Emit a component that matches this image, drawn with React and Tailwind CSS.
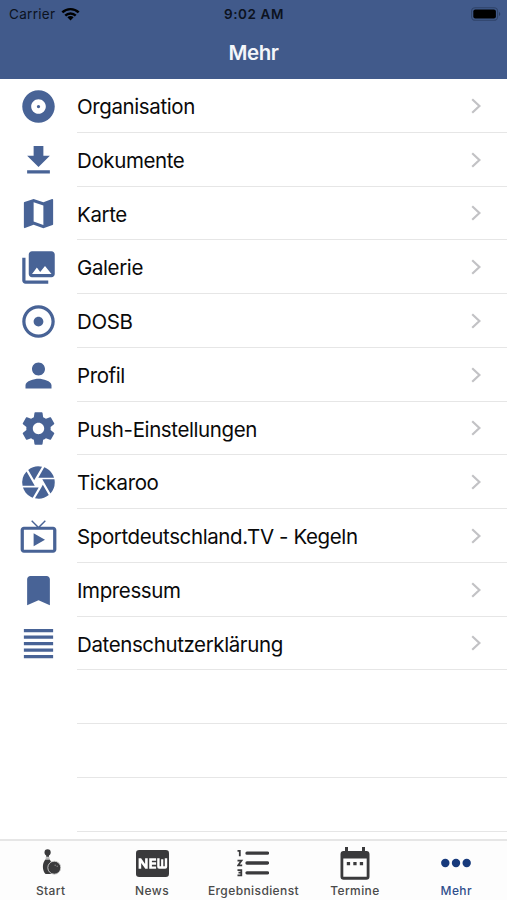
import {
  MdAdjust,
  MdAlbum,
  MdBookmark,
  MdCamera,
  MdFormatAlignJustify,
  MdMap,
  MdPerson,
} from 'react-icons/md';

const Icon = ({ children }) => (
  <svg viewBox="0 0 24 24" className="size-[39px]" fill="currentColor">
    {children}
  </svg>
);

const DownloadIcon = () => (
  <Icon>
    <path d="M19 9h-4V3H9v6H5l7 7 7-7zM5 18v2h14v-2H5z" />
  </Icon>
);

const GalleryIcon = () => (
  <Icon>
    <path d="M22 16V4c0-1.1-.9-2-2-2H8c-1.1 0-2 .9-2 2v12c0 1.1.9 2 2 2h12c1.1 0 2-.9 2-2zm-11-4l2.03 2.71L16 11l4 5H8l3-4zM2 6v14c0 1.1.9 2 2 2h14v-2H4V6H2z" />
  </Icon>
);

const SettingsIcon = () => (
  <Icon>
    <path d="M19.43 12.98c.04-.32.07-.64.07-.98s-.03-.66-.07-.98l2.11-1.65c.19-.15.24-.42.12-.64l-2-3.46c-.12-.22-.39-.3-.61-.22l-2.49 1c-.52-.4-1.08-.73-1.69-.98l-.38-2.65C14.46 2.18 14.25 2 14 2h-4c-.25 0-.46.18-.49.42l-.38 2.65c-.61.25-1.17.59-1.69.98l-2.49-1c-.23-.09-.49 0-.61.22l-2 3.46c-.13.22-.07.49.12.64l2.11 1.65c-.04.32-.07.65-.07.98s.03.66.07.98l-2.11 1.65c-.19.15-.24.42-.12.64l2 3.46c.12.22.39.3.61.22l2.49-1c.52.4 1.08.73 1.69.98l.38 2.65c.03.24.24.42.49.42h4c.25 0 .46-.18.49-.42l.38-2.65c.61-.25 1.17-.59 1.69-.98l2.49 1c.23.09.49 0 .61-.22l2-3.46c.12-.22.07-.49-.12-.64l-2.11-1.65zM12 15.5c-1.93 0-3.5-1.57-3.5-3.5s1.57-3.5 3.5-3.5 3.5 1.57 3.5 3.5-1.57 3.5-3.5 3.5z" />
  </Icon>
);

const TvIcon = () => (
  <Icon>
    <path d="M21 6h-7.9l3.4-3.4-.6-.6L12 5.9 8.100 2l-.6.6L10.900 6H3c-1.1 0-2 .89-2 2v12c0 1.1.9 2 2 2h18c1.1 0 2-.9 2-2V8c0-1.11-.9-2-2-2zm0 14.200H3V7.800h18v12.400zM9 10v8l7-4z" />
  </Icon>
);

const BowlingIcon = () => (
  <svg viewBox="0 0 20 28" className="h-[28px] w-[20px]" fill="#3a3a3c">
    <circle cx="6.600" cy="3.400" r="3.100" />
    <path d="M5.200 5.500h2.800v2.300H5.200z" />
    <path d="M4.700 8.500h3.800v1.100H4.700z" fill="#8a8a8a" />
    <path d="M4.400 10.400h4.400C10.600 13 11 16 11 19v6H4.600C1.200 21.500 .8 14.500 4.400 10.400z" />
    <circle cx="13.300" cy="18.700" r="6.500" stroke="#d0d0d0" strokeWidth="0.900" />
    <circle cx="14.200" cy="16.200" r="0.700" fill="#8a8a8a" />
    <circle cx="16.200" cy="17.300" r="0.700" fill="#8a8a8a" />
  </svg>
);

const NewIcon = () => (
  <svg viewBox="0 0 33 27" className="h-[27px] w-[33px]" fill="none">
    <rect width="33" height="27" rx="3.200" fill="#3a3a3c" />
    <path fill="#fff" d="M2.600 8.200h2.500l4 5.700V8.200h2.600v10.600H9.300l-4.100-5.700v5.700H2.600z" />
    <path fill="#fff" d="M13.200 8.200h6.900v2.500h-4.200v1.600h4.200v2.500h-4.200v1.600h4.200v2.400h-6.900z" />
    <path fill="#fff" d="M21.200 8.200h2.400v8h1.500v-7h2.200v7h1.500v-8h2.400v8.600q0 2-2 2h-6q-2 0-2-2z" />
  </svg>
);

const NumberedListIcon = () => (
  <svg viewBox="0 0 32 28" className="h-[28px] w-[32px]" fill="none" stroke="#3a3a3c">
    <path strokeWidth="3.300" strokeLinecap="round" d="M10 4.200h20.500M10 14h20.500M10 23.800h20.500" />
    <g strokeWidth="1.800">
      <path d="M.5 1.900h2.300V7.200" />
      <path d="M.5 11.600h4L1.200 16.300h4" />
      <path d="M.5 21.100h3.800v5.200H.5M1.500 23.700h2.800" />
    </g>
  </svg>
);

const CalendarIcon = () => (
  <svg viewBox="0 0 30 33" className="h-[33px] w-[30px]" fill="#3a3a3c">
    <path d="M5 0h3v4h14V0h3v4h1.500A3.200 3.200 0 0 1 29.500 7v22.500a3.200 3.200 0 0 1-3.200 3.200H3.700A3.200 3.200 0 0 1 .5 29.500V7A3.200 3.200 0 0 1 3.500 4H5zM3.300 11.500V29.800h23.400V11.500z" />
    <path d="M6.800 15h3.300v3.300H6.800zM13.300 15h3.300v3.300h-3.300zM19.800 15h3.300v3.300h-3.300z" />
  </svg>
);

const DotsIcon = () => (
  <svg viewBox="0 0 30 10" className="h-[10px] w-[30px]" fill="#173a7c">
    <circle cx="4.300" cy="5" r="4.200" />
    <circle cx="15" cy="5" r="4.200" />
    <circle cx="25.700" cy="5" r="4.200" />
  </svg>
);

const menuItems = [
  { label: 'Organisation', icon: MdAlbum },
  { label: 'Dokumente', icon: DownloadIcon },
  { label: 'Karte', icon: MdMap },
  { label: 'Galerie', icon: GalleryIcon },
  { label: 'DOSB', icon: MdAdjust },
  { label: 'Profil', icon: MdPerson },
  { label: 'Push-Einstellungen', icon: SettingsIcon },
  { label: 'Tickaroo', icon: MdCamera },
  { label: 'Sportdeutschland.TV - Kegeln', icon: TvIcon },
  { label: 'Impressum', icon: MdBookmark },
  { label: 'Datenschutzerklärung', icon: MdFormatAlignJustify },
];

const tabs = [
  { label: 'Start', icon: BowlingIcon },
  { label: 'News', icon: NewIcon },
  { label: 'Ergebnisdienst', icon: NumberedListIcon },
  { label: 'Termine', icon: CalendarIcon },
  { label: 'Mehr', icon: DotsIcon, active: true },
];

const StatusBar = () => (
  <div className="grid h-[28px] grid-cols-3 items-center pl-[9px] pr-[6px] text-[13.5px] leading-none text-[#0c1220]">
    <div className="flex items-center gap-[6px]">
      <span className="pt-px tracking-[0.3px]">Carrier</span>
      <svg viewBox="0 0 20 14" className="h-[14px] w-[19px]" fill="none" stroke="#000">
        <path strokeWidth="2.600" d="M1.400 5.400a12.200 12.200 0 0 1 17.200 0M4.500 8.700a7.800 7.800 0 0 1 11 0" />
        <path fill="#000" stroke="none" d="M10 13.800 6.700 10.500a4.700 4.700 0 0 1 6.600 0z" />
      </svg>
    </div>
    <span className="pr-[2px] pt-px text-center font-semibold tracking-[0.6px]">9:02 AM</span>
    <div className="flex justify-end pb-px">
      <svg viewBox="0 0 30 14" className="h-[14px] w-[30px]">
        <rect x="0.600" y="0.700" width="26" height="12.600" rx="3.600" fill="none" stroke="#2f4369" strokeWidth="1.100" />
        <rect x="2.300" y="2.500" width="22.600" height="9" rx="2" fill="#000" />
        <path d="M28 5v4c1.700-.7 1.700-3.300 0-4z" fill="#2b3d61" />
      </svg>
    </div>
  </div>
);

const MenuRow = ({ item }) => {
  const ItemIcon = item.icon;
  return (
    <li className="flex h-[53.75px]">
      <div className="flex w-[77px] items-center justify-center pt-px text-[#486396]">
        <ItemIcon className="size-[39px]" />
      </div>
      <div className="flex flex-1 items-center justify-between border-b border-[#e6e6e6] pr-[26px]">
        <span className="whitespace-nowrap pt-[4px] text-[20.5px] leading-none tracking-[-0.39px] text-[#0a0a0a]">
          {item.label}
        </span>
        <svg viewBox="0 0 10 16" className="mt-px h-[16px] w-[10px]" fill="none" stroke="#c2c2c5" strokeWidth="2.200">
          <path d="M1.200 1.200 8.400 8l-7.200 6.800" />
        </svg>
      </div>
    </li>
  );
};

const App = () => {
  return (
    <div className="flex h-[900px] w-[507px] flex-col overflow-hidden bg-white font-['Inter',sans-serif]">
      <header className="h-[79px] bg-[#415a8b]">
        <StatusBar />
        <h1 className="pt-[14px] text-center text-[20.5px] font-semibold leading-[22px] tracking-[-0.4px] text-[#f4f6fa]">
          Mehr
        </h1>
      </header>
      <ul className="flex-1 overflow-hidden">
        {menuItems.map((item) => (
          <MenuRow key={item.label} item={item} />
        ))}
        {[0, 1, 2].map((n) => (
          <li key={n} className="ml-[77px] h-[53.75px] border-b border-[#e6e6e6]"></li>
        ))}
      </ul>
      <nav className="grid h-[61px] grid-cols-5 border-t-2 border-[#e6e6e6] bg-[#fdfdfd]">
        {tabs.map(({ label, icon: TabIcon, active }) => (
          <div key={label} className="flex flex-col items-center">
            <div className="flex h-[44px] items-center">
              <TabIcon />
            </div>
            <span
              className={`whitespace-nowrap text-[12px] font-medium leading-[12px] tracking-[0.4px] ${
                active ? 'text-[#2f4f8c]' : 'text-[#4a4a4a]'
              }`}
            >
              {label}
            </span>
          </div>
        ))}
      </nav>
    </div>
  );
};

export default App;
